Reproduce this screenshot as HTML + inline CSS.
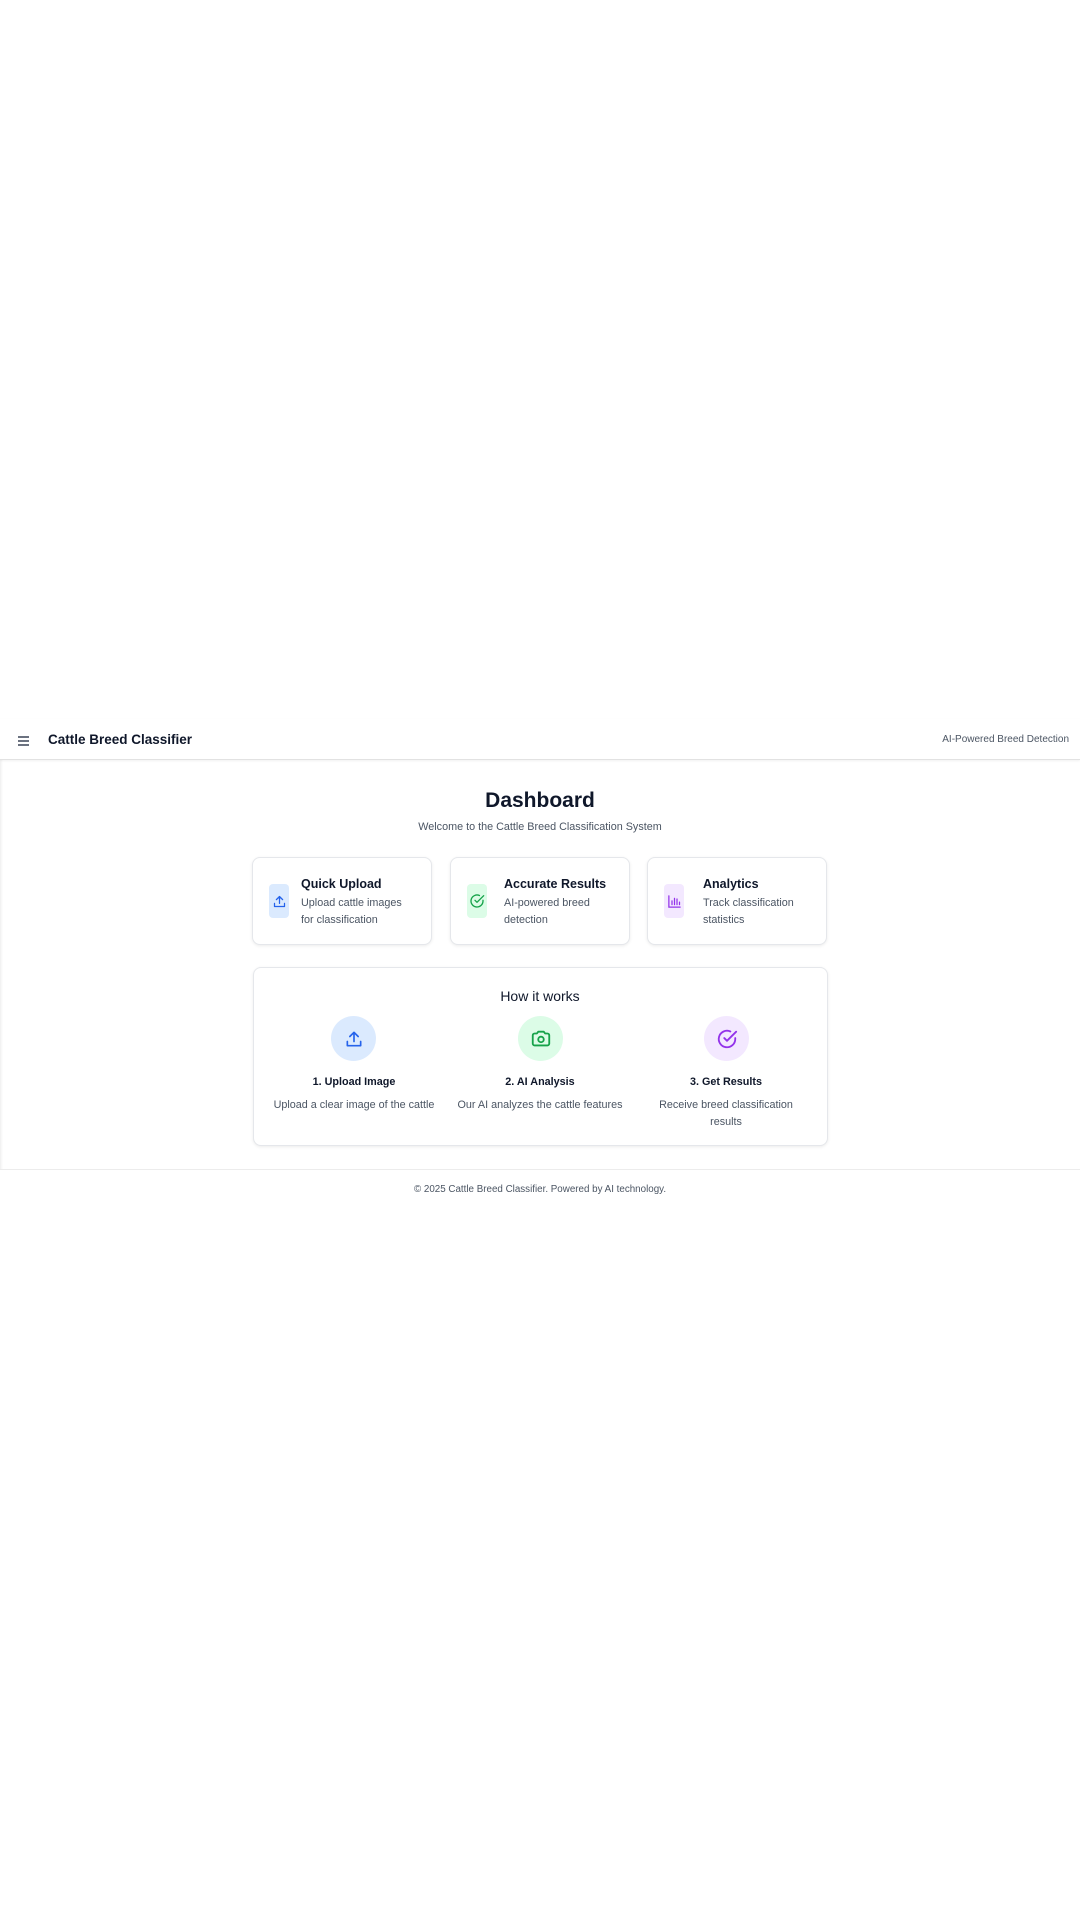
<!DOCTYPE html>
<html><head><meta charset="utf-8"><style>
*{margin:0;padding:0;box-sizing:border-box}
body{width:1080px;height:1920px;background:#fff;font-family:"Liberation Sans",sans-serif;position:relative;overflow:hidden;color:#0f172a}
.hdr{position:absolute;left:0;top:719px;width:1080px;height:41px;border-bottom:1px solid #e2e2e2;box-shadow:0 1px 2px rgba(0,0,0,.06)}
.hb{position:absolute;left:18px;top:736px;width:11px}
.hb i{display:block;height:1.6px;background:#6b7280;margin-bottom:2.6px}
.t{position:absolute;white-space:nowrap}
.card{position:absolute;border:1px solid #e5e7eb;border-radius:8px;box-shadow:0 1px 3px rgba(0,0,0,.08);background:#fff}
.ib{position:absolute;width:20px;height:34px;border-radius:4px;display:flex;align-items:center;justify-content:center}
.ct{font-size:12.5px;font-weight:bold;color:#0f172a}
.cd{font-size:10.8px;color:#4b5563;line-height:17px}
.circ{position:absolute;width:45px;height:45px;border-radius:50%;display:flex;align-items:center;justify-content:center}
.st{position:absolute;width:186px;text-align:center;font-size:10.8px;font-weight:bold}
.sd{position:absolute;width:186px;text-align:center;font-size:10.8px;color:#4b5563;line-height:17px}
</style></head><body>
<div style="position:absolute;left:0;top:760px;width:3px;height:410px;background:linear-gradient(90deg,#f0f0f0,#fff)"></div>
<div class="hdr"></div>
<div class="hb"><i></i><i></i><i></i></div>
<div class="t" style="left:48px;top:732px;font-size:13.5px;font-weight:bold">Cattle Breed Classifier</div>
<div class="t" style="right:11px;top:734px;font-size:10px;color:#4b5563">AI-Powered Breed Detection</div>
<div class="t" style="left:0;width:1080px;text-align:center;top:789px;font-size:21px;font-weight:bold">Dashboard</div>
<div class="t" style="left:0;width:1080px;text-align:center;top:821px;font-size:10.8px;color:#4b5563">Welcome to the Cattle Breed Classification System</div>

<div class="card" style="left:252px;top:857px;width:180px;height:88px"></div>
<div class="ib" style="left:269px;top:884px;background:#dbeafe"><svg width="15" height="15" viewBox="0 0 24 24" fill="none" stroke="#2563eb" stroke-width="2" stroke-linecap="round" stroke-linejoin="round"><path d="M4 15v5h16v-5M12 4v11M7 9l5-5 5 5"/></svg></div>
<div class="t ct" style="left:301px;top:877px">Quick Upload</div>
<div class="t cd" style="left:301px;top:895px">Upload cattle images<br>for classification</div>

<div class="card" style="left:450px;top:857px;width:180px;height:88px"></div>
<div class="ib" style="left:467px;top:884px;background:#dcfce7"><svg width="16" height="16" viewBox="0 0 24 24" fill="none" stroke="#16a34a" stroke-width="2" stroke-linecap="round" stroke-linejoin="round"><path d="M21 11v1a9 9 0 1 1-5.3-8.2"/><path d="M9 11l3 3L22 4"/></svg></div>
<div class="t ct" style="left:504px;top:877px">Accurate Results</div>
<div class="t cd" style="left:504px;top:895px">AI-powered breed<br>detection</div>

<div class="card" style="left:647px;top:857px;width:180px;height:88px"></div>
<div class="ib" style="left:664px;top:884px;background:#f3e8ff"><svg width="15" height="15" viewBox="0 0 24 24" fill="none" stroke="#9333ea" stroke-width="2" stroke-linecap="round"><path d="M3 3v18h18M8 17v-6M12 17V7M16 17v-9M20 17v-4"/></svg></div>
<div class="t ct" style="left:703px;top:877px">Analytics</div>
<div class="t cd" style="left:703px;top:895px">Track classification<br>statistics</div>

<div class="card" style="left:253px;top:967px;width:575px;height:179px"></div>
<div class="t" style="left:0;width:1080px;text-align:center;top:988px;font-size:14px">How it works</div>
<div class="circ" style="left:331px;top:1016px;background:#dbeafe"><svg width="20" height="20" viewBox="0 0 24 24" fill="none" stroke="#2563eb" stroke-width="2" stroke-linecap="round" stroke-linejoin="round"><path d="M4 15v5h16v-5M12 4v11M7 9l5-5 5 5"/></svg></div>
<div class="circ" style="left:518px;top:1016px;background:#dcfce7"><svg width="22" height="22" viewBox="0 0 24 24" fill="none" stroke="#16a34a" stroke-width="2" stroke-linecap="round" stroke-linejoin="round"><path d="M3 8a2 2 0 0 1 2-2h2.5l1.5-2h6l1.5 2H19a2 2 0 0 1 2 2v9a2 2 0 0 1-2 2H5a2 2 0 0 1-2-2z"/><circle cx="12" cy="12.5" r="3"/></svg></div>
<div class="circ" style="left:704px;top:1016px;background:#f3e8ff"><svg width="22" height="22" viewBox="0 0 24 24" fill="none" stroke="#9333ea" stroke-width="2" stroke-linecap="round" stroke-linejoin="round"><path d="M21 11v1a9 9 0 1 1-5.3-8.2"/><path d="M9 11l3 3L22 4"/></svg></div>
<div class="st" style="left:261px;top:1076px">1. Upload Image</div>
<div class="st" style="left:447px;top:1076px">2. AI Analysis</div>
<div class="st" style="left:633px;top:1076px">3. Get Results</div>
<div class="sd" style="left:261px;top:1097px">Upload a clear image of the cattle</div>
<div class="sd" style="left:447px;top:1097px">Our AI analyzes the cattle features</div>
<div class="sd" style="left:648px;width:156px;top:1097px">Receive breed classification results</div>

<div style="position:absolute;left:0;top:1169px;width:1080px;height:1px;background:#ececec"></div>
<div class="t" style="left:0;width:1080px;text-align:center;top:1184px;font-size:9.8px;color:#4b5563">© 2025 Cattle Breed Classifier. Powered by AI technology.</div>
</body></html>
